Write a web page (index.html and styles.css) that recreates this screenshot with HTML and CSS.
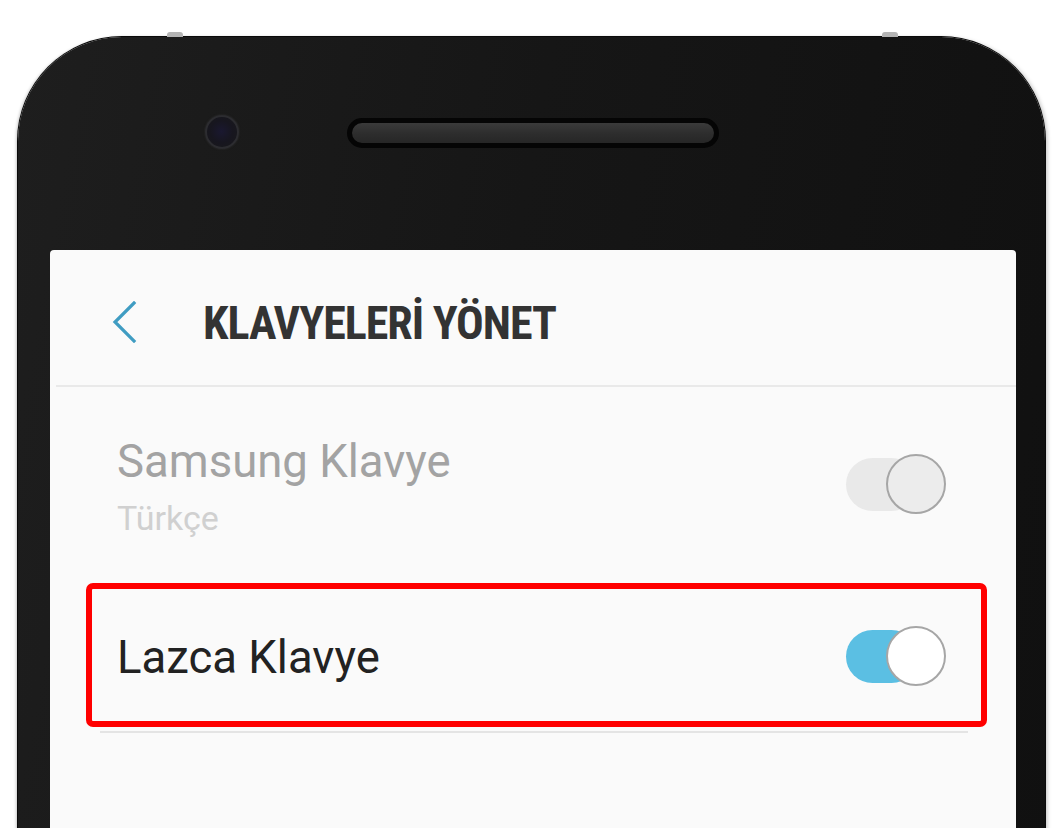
FILE: index.html
```html
<!DOCTYPE html>
<html lang="tr">
<head>
<meta charset="utf-8">
<title>Klavyeleri Yönet</title>
<link rel="stylesheet" href="styles.css">
</head>
<body>
<div class="stage">
  <div class="phone">
    <span class="bump bump-top-l"></span>
    <span class="bump bump-top-r"></span>
    <div class="bezel-top">
      <span class="camera"></span>
      <span class="speaker"></span>
    </div>
    <div class="screen">
      <header class="appbar">
        <svg class="back" width="26" height="42" viewBox="0 0 26 42" aria-hidden="true">
          <path d="M23 2 L4 21 L23 40" fill="none" stroke="#3f9cc2" stroke-width="3.2" stroke-linecap="square"/>
        </svg>
        <h1 class="title">KLAVYELERİ YÖNET</h1>
      </header>
      <div class="list">
        <div class="row row-disabled">
          <div class="texts">
            <div class="name">Samsung Klavye</div>
            <div class="sub">Türkçe</div>
          </div>
          <span class="switch switch-off"><span class="knob"></span></span>
        </div>
        <div class="row row-marked">
          <div class="texts">
            <div class="name">Lazca Klavye</div>
          </div>
          <span class="switch switch-on"><span class="knob"></span></span>
        </div>
        <div class="divider"></div>
      </div>
    </div>
  </div>
</div>
</body>
</html>
```

FILE: styles.css
```css
html, body {
  margin: 0;
  padding: 0;
  background: #ffffff;
  overflow: hidden;
  height: 828px;
}

.stage {
  width: 1060px;
  height: 828px;
  overflow: hidden;
  padding: 37px 0 0 18px;
  box-sizing: border-box;
}

.phone {
  position: relative;
  width: 1027px;
  height: 900px;
  box-sizing: border-box;
  padding: 0 29px 0 32px;
  border-radius: 104px 104px 0 0;
  background: linear-gradient(100deg, #1e1e1e 0%, #161616 45%, #101010 100%);
  box-shadow: 0 0 0 1px #0a0a0a, -3px 0 3px -1px #c8c8c8, 3px 0 4px -1px #bdbdbd;
  display: flex;
  flex-direction: column;
}

.bump {
  position: absolute;
  top: -5px;
  width: 16px;
  height: 5px;
  border-radius: 3px 3px 0 0;
  background: #b4b4b4;
}
.bump-top-l { left: 149px; }
.bump-top-r { left: 864px; }

.bezel-top {
  height: 213px;
  display: flex;
  align-items: flex-start;
  padding-top: 78px;
  box-sizing: border-box;
}

.camera {
  width: 34px;
  height: 34px;
  margin-left: 155px;
  border-radius: 50%;
  box-sizing: border-box;
  border: 2px solid #2c2c30;
  background: radial-gradient(circle at 48% 48%, #1a1830 0%, #17161f 50%, #19191b 100%);
  box-shadow: 0 0 2px #333;
}

.speaker {
  width: 372px;
  height: 30px;
  margin-left: 108px;
  margin-top: 3px;
  box-sizing: border-box;
  border-radius: 15px;
  border: 5px solid #050505;
  background: linear-gradient(#3a3a3a, #2e2e2e 50%, #262626);
}

.screen {
  flex: 1;
  background: #fafafa;
  border-radius: 4px 4px 0 0;
  font-family: Roboto, "Noto Sans", "Liberation Sans", sans-serif;
}

.appbar {
  height: 137px;
  display: flex;
  align-items: center;
  padding-left: 55px;
  border-bottom: 2px solid #e9e9e9;
  margin-left: 6px;
  box-sizing: border-box;
}

.back {
  display: block;
  margin-top: 9px;
}

.title {
  margin: 11px 0 0 66px;
  font-family: "Liberation Sans Narrow", "Roboto Condensed", Roboto, sans-serif;
  font-weight: 700;
  font-size: 46px;
  letter-spacing: -1px;
  color: #333333;
}

.list {
  display: flex;
  flex-direction: column;
}

.row {
  display: flex;
  align-items: center;
  justify-content: space-between;
  padding: 0 70px 0 67px;
}

.texts {
  padding-top: 4px;
}

.row-disabled {
  height: 194px;
}

.row-marked {
  position: relative;
  height: 150px;
}

.row-marked::after {
  content: "";
  position: absolute;
  left: 36px;
  right: 29px;
  top: 2px;
  bottom: 4px;
  border: 6px solid #ff0000;
  border-radius: 7px;
}

.name {
  font-size: 45.5px;
  line-height: 54px;
  color: #222222;
}

.row-disabled .name {
  color: #a3a3a3;
}

.sub {
  margin-top: 9px;
  font-size: 34px;
  line-height: 40px;
  color: #d0d0d0;
}

.switch {
  position: relative;
  width: 100px;
  height: 60px;
  display: flex;
  align-items: center;
}

.switch::before {
  content: "";
  width: 72px;
  height: 53px;
  border-radius: 27px;
}

.switch-off::before { background: #e9e9e9; }
.switch-on::before { background: #5bbfe3; }

.knob {
  position: absolute;
  right: 0;
  top: 0;
  width: 60px;
  height: 60px;
  box-sizing: border-box;
  border-radius: 50%;
  border: 2px solid #a6a6a6;
}

.switch-off .knob { background: #ececec; }
.switch-on .knob { background: #ffffff; }

.divider {
  height: 2px;
  margin: 0 48px 0 50px;
  background: #e4e4e4;
}
```
